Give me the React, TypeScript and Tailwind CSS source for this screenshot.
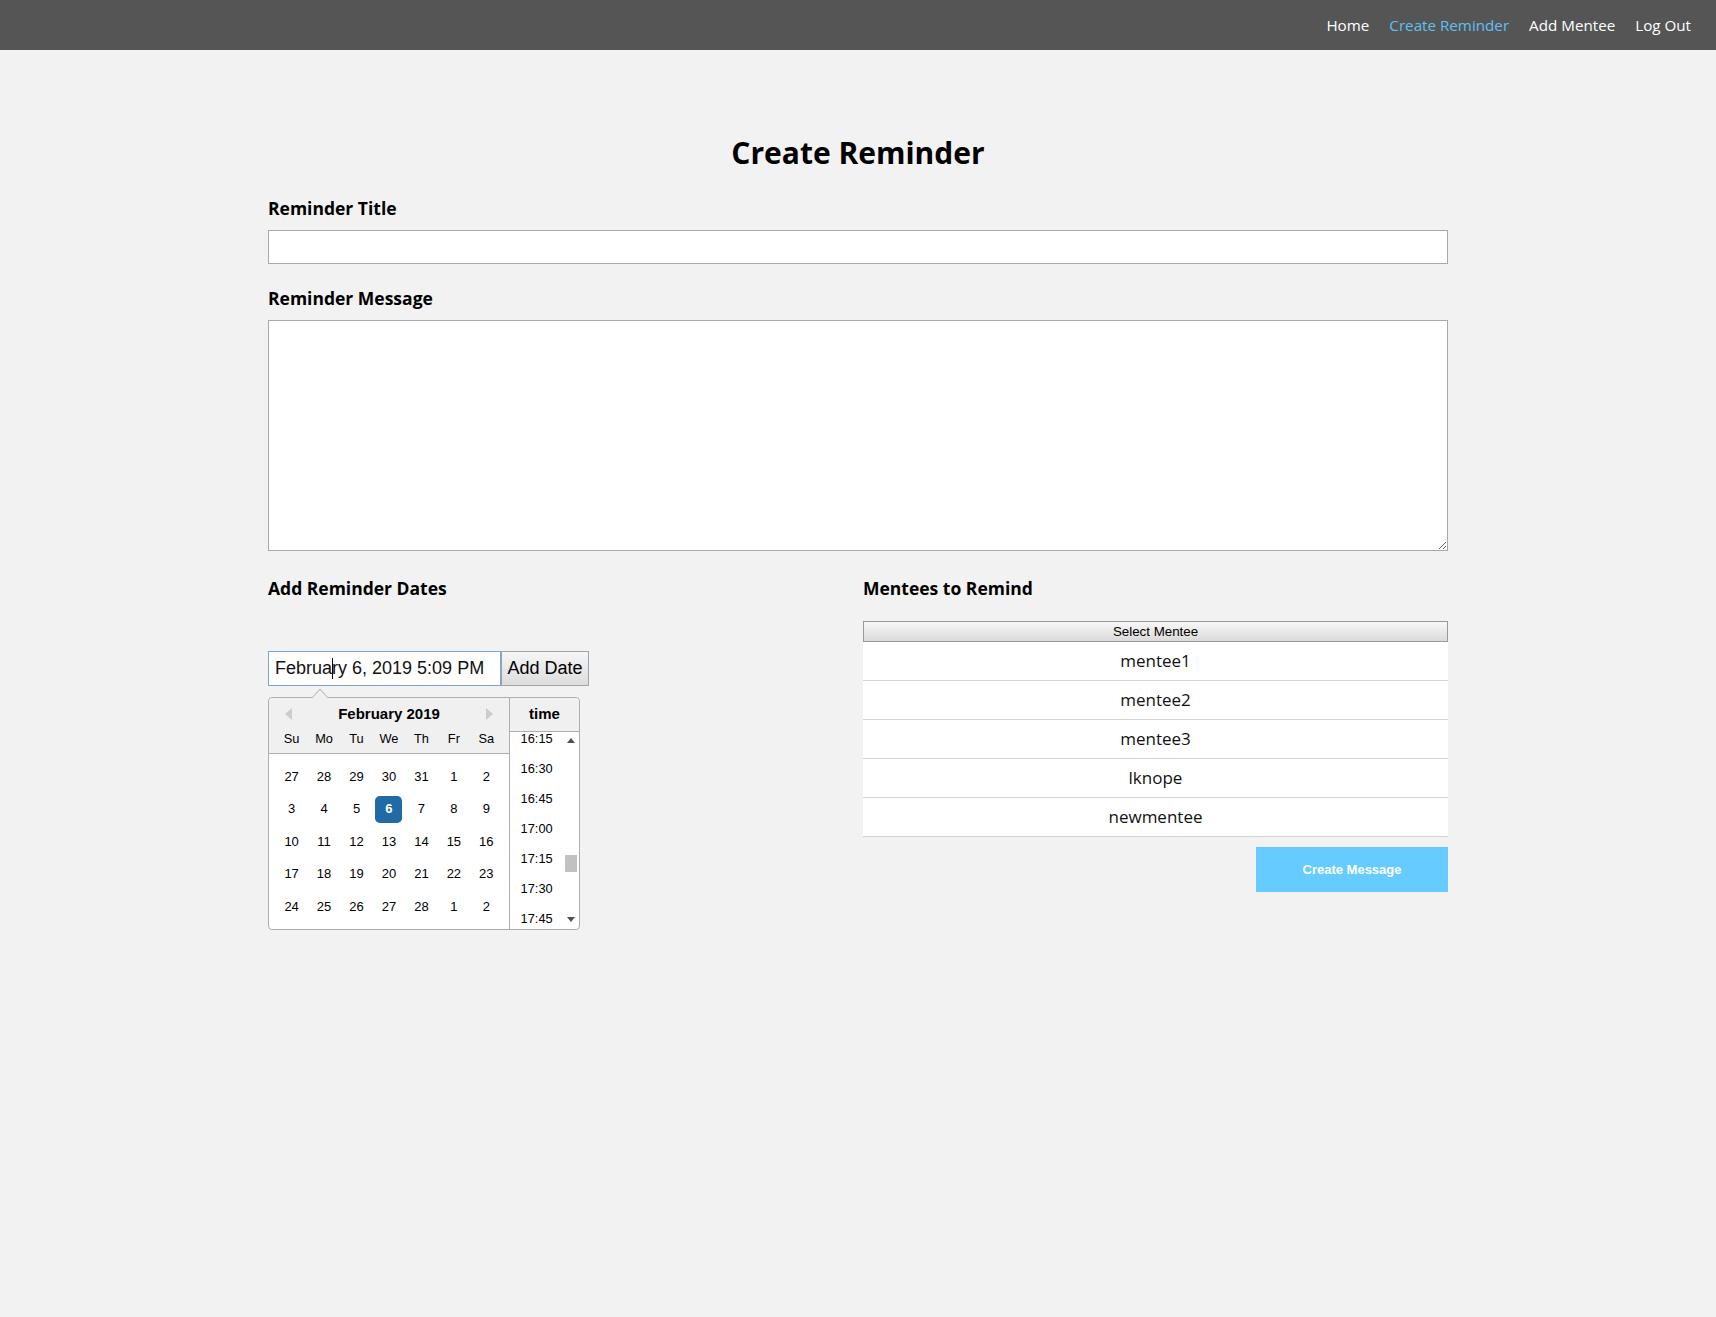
import { useState } from 'react';

const weeks = [
  ['27', '28', '29', '30', '31', '1', '2'],
  ['3', '4', '5', '6', '7', '8', '9'],
  ['10', '11', '12', '13', '14', '15', '16'],
  ['17', '18', '19', '20', '21', '22', '23'],
  ['24', '25', '26', '27', '28', '1', '2'],
];

const dayNames = ['Su', 'Mo', 'Tu', 'We', 'Th', 'Fr', 'Sa'];
const times = ['16:15', '16:30', '16:45', '17:00', '17:15', '17:30', '17:45'];
const mentees = ['mentee1', 'mentee2', 'mentee3', 'lknope', 'newmentee'];

function Nav() {
  const links = ['Home', 'Create Reminder', 'Add Mentee', 'Log Out'];
  return (
    <nav className="h-[50px] bg-[#555555] flex items-center justify-end gap-[20px] pr-[25px] font-['Open_Sans',sans-serif] text-[15.2px]">
      {links.map((l) => (
        <a key={l} className={l === 'Create Reminder' ? 'text-[#5ec0f2]' : 'text-white'}>
          {l}
        </a>
      ))}
    </nav>
  );
}

function DatePicker() {
  return (
    <div className="absolute left-0 top-[46px] flex bg-white border border-[#aeaeae] rounded-[4px] font-['Liberation_Sans',Arial,sans-serif] text-black">
      {/* little arrow pointing at the input */}
      <svg className="absolute left-[41px] -top-[10px]" width="20" height="11" viewBox="0 0 20 11">
        <polygon points="1,11 10,1 19,11" fill="#f0f0f0" stroke="#aeaeae" strokeWidth="1" />
        <rect x="0" y="10" width="20" height="1" fill="#f0f0f0" />
      </svg>
      <div className="w-[240px]">
        <div className="bg-[#f0f0f0] border-b border-[#aeaeae] rounded-tl-[4px] pb-[5px] relative">
          <div className="h-[32px] flex items-center justify-center text-[15px] font-bold">February 2019</div>
          <svg className="absolute left-[16px] top-[10px]" width="8" height="12" viewBox="0 0 8 12">
            <polygon points="7,0 7,12 0,6" fill="#cccccc" />
          </svg>
          <svg className="absolute right-[16px] top-[10px]" width="8" height="12" viewBox="0 0 8 12">
            <polygon points="1,0 1,12 8,6" fill="#cccccc" />
          </svg>
          <div className="flex px-[6.4px] h-[18px] items-center text-[12.8px]">
            {dayNames.map((d) => (
              <div key={d} className="w-[32.5px] text-center">{d}</div>
            ))}
          </div>
        </div>
        <div className="p-[6.4px] pb-[6px]">
          {weeks.map((w, i) => (
            <div key={i} className="flex h-[32.5px] items-center text-[13px]">
              {w.map((d, j) => (
                <div key={j} className="w-[32.5px] flex justify-center">
                  {i === 1 && d === '6' ? (
                    <span className="w-[27px] h-[27px] rounded-[4.8px] bg-[#216ba5] text-white font-bold flex items-center justify-center">
                      {d}
                    </span>
                  ) : (
                    <span className="w-[27px] h-[27px] flex items-center justify-center">{d}</span>
                  )}
                </div>
              ))}
            </div>
          ))}
        </div>
      </div>
      <div className="w-[70px] border-l border-[#aeaeae] flex flex-col">
        <div className="h-[34px] bg-[#f0f0f0] border-b border-[#aeaeae] rounded-tr-[4px] flex items-center justify-center text-[15px] font-bold">
          time
        </div>
        <div className="h-[197px] flex overflow-hidden">
          <div className="w-[54px] -mt-[8px]">
            {times.map((t) => (
              <div key={t} className="h-[29.9px] flex items-center justify-center text-[12.8px]">
                {t}
              </div>
            ))}
          </div>
          <div className="w-[16px] relative">
            <svg className="absolute left-[4px] top-[6px]" width="8" height="5" viewBox="0 0 8 5">
              <polygon points="0,5 8,5 4,0" fill="#505050" />
            </svg>
            <div className="absolute left-[2px] top-[123px] w-[12px] h-[17px] bg-[#c1c1c1]" />
            <svg className="absolute left-[4px] bottom-[7px]" width="8" height="5" viewBox="0 0 8 5">
              <polygon points="0,0 8,0 4,5" fill="#505050" />
            </svg>
          </div>
        </div>
      </div>
    </div>
  );
}

export default function App() {
  const [title, setTitle] = useState('');
  const [message, setMessage] = useState('');

  return (
    <div className="min-h-[1317px] bg-[#f2f2f2] text-black">
      <Nav />
      <main className="w-[1180px] mx-auto font-['Open_Sans',sans-serif]">
        <h1 className="mt-[83px] text-center text-[30px] leading-[40px] font-bold">Create Reminder</h1>

        <label className="block mt-[23px] mb-[10px] text-[17.5px] leading-[24px] font-bold">Reminder Title</label>
        <input
          value={title}
          onChange={(e) => setTitle(e.target.value)}
          className="block w-full h-[34px] bg-white border border-[#a9a9a9] px-2 outline-none"
        />

        <label className="block mt-[22px] mb-[10px] text-[17.5px] leading-[24px] font-bold">Reminder Message</label>
        <textarea
          value={message}
          onChange={(e) => setMessage(e.target.value)}
          className="block w-full h-[231px] bg-white border border-[#a9a9a9] p-2 outline-none"
        />

        <div className="grid grid-cols-[595px_585px] mt-[25px]">
          <div>
            <h3 className="text-[17.5px] leading-[24px] font-bold">Add Reminder Dates</h3>
            <div className="relative mt-[51px] flex font-['Liberation_Sans',Arial,sans-serif] text-[18px]">
              <div className="w-[233px] h-[35px] bg-white border border-[#7aa3e0] flex items-center pl-[6px] text-[#111]">
                Februa<span className="inline-block w-px h-[21px] bg-black -mx-[0.5px]" />ry 6, 2019 5:09 PM
              </div>
              <button className="w-[88px] h-[35px] border border-[#a3a3a3] bg-gradient-to-b from-[#f6f6f6] to-[#dddddd] text-[18px] text-black">
                Add Date
              </button>
              <DatePicker />
            </div>
          </div>

          <div>
            <h3 className="text-[17.5px] leading-[24px] font-bold">Mentees to Remind</h3>
            <button className="mt-[21px] w-full h-[21px] border border-[#999999] bg-gradient-to-b from-[#f8f8f8] to-[#dadada] font-['Liberation_Sans',Arial,sans-serif] text-[13.33px] text-black leading-none">
              Select Mentee
            </button>
            <ul>
              {mentees.map((m) => (
                <li key={m} className="h-[39px] bg-white border-b border-[#d3d3d3] flex items-center justify-center text-[17px] text-[#111]">
                  {m}
                </li>
              ))}
            </ul>
            <div className="flex justify-end mt-[10px]">
              <button className="w-[192px] h-[45px] bg-[#66ccff] text-white font-bold text-[13px] font-['Liberation_Sans',Arial,sans-serif]">
                Create Message
              </button>
            </div>
          </div>
        </div>
      </main>
    </div>
  );
}
